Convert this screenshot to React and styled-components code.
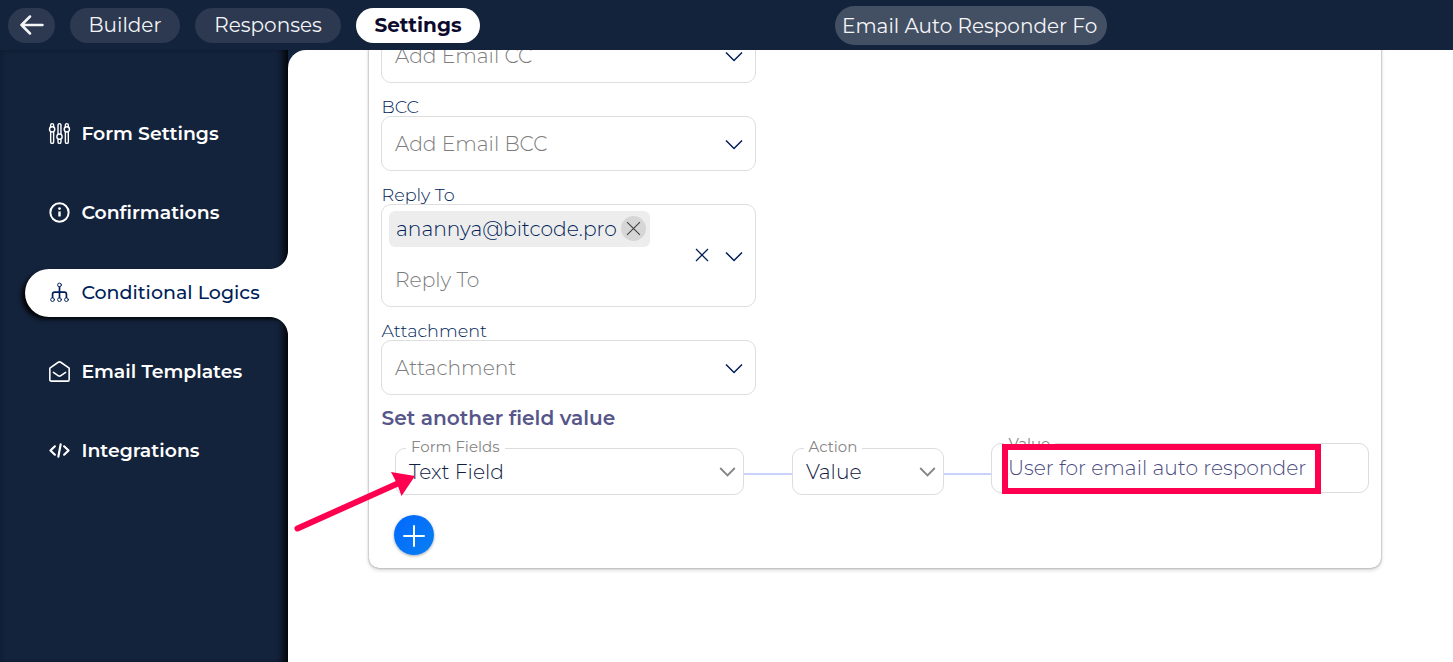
import React from 'react';
import styled, { createGlobalStyle, css } from 'styled-components';

const NAVY = '#14233c';

const GlobalStyle = createGlobalStyle`
  * { box-sizing: border-box; }
  body {
    margin: 0;
    background: ${NAVY};
    overflow: hidden;
    font-family: Montserrat, Inter, 'Open Sans', sans-serif;
    font-size: 20px;
    color: #001e58;
  }
`;

const Page = styled.div`
  display: flex;
  flex-direction: column;
  height: 662px;
`;

const Label = styled.span`
  white-space: nowrap;
`;

/* ---------- top bar ---------- */

const TopBar = styled.header`
  display: flex;
  align-items: center;
  height: 50px;
  flex: none;
  padding: 1px 0 0 8px;
  background: ${NAVY};
`;

const NavPill = styled.button`
  display: flex;
  align-items: center;
  justify-content: center;
  width: ${(p) => p.$width}px;
  height: 35px;
  margin: 0 15px 0 0;
  padding: 0 0 1px;
  border: 0;
  border-radius: 18px;
  font: inherit;
  background: ${(p) => (p.$active ? '#fff' : '#2c3950')};
  color: ${(p) => (p.$active ? '#0c0b2e' : '#f4f5f7')};
  font-weight: ${(p) => (p.$active ? 700 : 400)};
`;

const FormName = styled.div`
  display: flex;
  align-items: center;
  width: 272px;
  height: 39px;
  margin-left: 340px;
  padding-left: 7px;
  border-radius: 20px;
  background: #434f63;
  color: #f4f5f7;
`;

/* ---------- side menu ---------- */

const Body = styled.div`
  display: flex;
  flex: 1;
  min-height: 0;
`;

const Sidebar = styled.nav`
  display: flex;
  flex-direction: column;
  gap: 31.25px;
  width: 288px;
  flex: none;
  padding: 60px 0 0 25px;
  background: ${NAVY};
  box-shadow: inset -9px 0 8px -5px #000, inset 3px 0 5px -3px #0c1830;
`;

const activeItem = css`
  position: relative;
  top: 0.5px;
  background: #fff;
  color: #001e58;
  font-size: 19px;
  font-weight: 500;
  box-shadow: -4px 3px 5px -1px #000;

  &::before,
  &::after {
    content: '';
    position: absolute;
    right: 0;
    width: 18px;
    height: 18px;
  }
  &::before {
    bottom: 100%;
    background: radial-gradient(circle at 0 0, transparent 17.5px, #fff 18.3px);
  }
  &::after {
    top: 100%;
    background: radial-gradient(circle at 0 100%, transparent 17.5px, #fff 18.3px);
  }
`;

const MenuItem = styled.a`
  display: flex;
  align-items: center;
  gap: 12.4px;
  height: 48px;
  padding: 0 0 1px 24px;
  border-radius: 24px 0 0 24px;
  font-size: 18.85px;
  font-weight: 600;
  line-height: 23px;
  color: #fff;
  ${(p) => p.$active && activeItem}
`;

const MenuIcon = styled.svg`
  width: 21px;
  height: 21px;
  margin-right: -1px;
  flex: none;
  overflow: visible;
  fill: none;
  stroke: currentColor;
  stroke-width: ${(p) => p.$weight || 1.5};
  stroke-linecap: round;
  stroke-linejoin: round;
`;

/* ---------- content ---------- */

const Main = styled.main`
  position: relative;
  display: flex;
  flex-direction: column;
  align-items: flex-start;
  flex: 1;
  padding-left: 81px;
  background: #fff;
  border-top-left-radius: 18px;
  overflow: hidden;
`;

const Card = styled.section`
  display: flex;
  flex-direction: column;
  align-items: flex-start;
  width: 1012px;
  height: 540px;
  margin-top: -22px;
  padding-left: 12px;
  border-radius: 0 0 10px 10px;
  background: #fff;
  box-shadow: 0 0 2px rgba(0, 0, 0, 0.45), 0 2px 4px rgba(0, 0, 0, 0.18);
`;

const FieldLabel = styled.label`
  display: flex;
  align-items: flex-end;
  height: 33px;
  padding-left: 0.5px;
  font-size: 17.6px;
  line-height: 18px;
  font-weight: 300;
`;

const Select = styled.div`
  display: flex;
  align-items: center;
  justify-content: space-between;
  width: 375px;
  height: ${(p) => p.$height || 55}px;
  padding: 0 12px 0 7px;
  border: 1px solid #dedede;
  border-radius: 10px;
  font-size: 20.25px;
  font-weight: 300;
`;

const SelectBody = styled.div`
  display: flex;
  flex-direction: column;
  align-items: flex-start;
  gap: 20px;
  padding-bottom: 8px;
`;

const Placeholder = styled.span`
  padding-left: 6px;
  line-height: 26px;
  color: #7c7c7c;
`;

const Tag = styled.span`
  display: flex;
  align-items: center;
  gap: 4px;
  width: 261px;
  height: 36px;
  padding-left: 7px;
  border-radius: 6px;
  background: #ededed;
`;

const TagRemove = styled.span`
  display: flex;
  align-items: center;
  justify-content: center;
  width: 25px;
  height: 25px;
  flex: none;
  border-radius: 50%;
  background: #d6d6d6;
  color: #444;
`;

const Controls = styled.span`
  display: flex;
  align-items: center;
  gap: 16px;
  padding-top: 2px;
`;

const LineIcon = styled.svg`
  display: block;
  fill: none;
  stroke: currentColor;
  stroke-width: ${(p) => p.$weight || 1.5};
  stroke-linecap: ${(p) => p.$cap || 'butt'};
`;

const ClearIcon = styled(LineIcon)`
  margin-bottom: 3px;
`;

const Heading = styled.h2`
  margin: 10px 0 0;
  height: 43px;
  padding-left: 0.5px;
  font-size: 20.15px;
  line-height: 25px;
  font-weight: 600;
  color: #56568a;
`;

const LogicRow = styled.div`
  display: flex;
  align-items: flex-start;
  margin-left: 14px;
`;

const Outlined = styled.div`
  position: relative;
  display: flex;
  align-items: center;
  justify-content: space-between;
  width: ${(p) => p.$width}px;
  height: ${(p) => p.$height || 47}px;
  margin-top: ${(p) => (p.$height ? -5 : 0)}px;
  padding: 0 7px ${(p) => (p.$height ? 2 : 0)}px ${(p) => p.$inset || 13}px;
  border: 1px solid #dcdcdc;
  border-radius: 10px;
  font-size: 20.25px;
  font-weight: 300;
  color: ${(p) => p.$color || '#0f2042'};
`;

const Notch = styled.span`
  position: absolute;
  top: ${(p) => p.$top || -11}px;
  left: ${(p) => p.$left || 10}px;
  padding: 0 5px;
  background: #fff;
  font-size: 15px;
  line-height: 18px;
  font-weight: 400;
  color: #858585;
`;

const Connector = styled.span`
  width: ${(p) => p.$width}px;
  height: 2px;
  margin-top: 25px;
  background: #c8d2fb;
`;

const AddButton = styled.button`
  display: flex;
  align-items: center;
  justify-content: center;
  width: 40px;
  height: 40px;
  margin: 20px 0 0 13px;
  padding: 1px 0 0;
  border: 0;
  border-radius: 50%;
  color: #fff;
  background: linear-gradient(135deg, #0068ff, #0a7ff0);
  box-shadow: 0 1px 3px rgba(0, 0, 0, 0.35);
`;

const Highlight = styled.div`
  position: absolute;
  left: 714px;
  top: 394px;
  width: 319px;
  height: 50px;
  border: 6px solid #ff0050;
`;

const Pointer = styled.svg`
  position: absolute;
  left: 0;
  top: 412px;
`;

const FormSettingsIcon = () => (
  <MenuIcon viewBox="0 0 20 20" $weight={1.35}>
    <path d="M1.6 3.7V2a1.4 1.4 0 0 1 2.8 0v1.7M1.6 8.3V18a1.4 1.4 0 0 0 2.8 0V8.3M8.6 10.7V2a1.4 1.4 0 0 1 2.8 0v8.7M8.6 15.3V18a1.4 1.4 0 0 0 2.8 0v-2.7M15.6 3.7V2a1.4 1.4 0 0 1 2.8 0v1.7M15.6 8.3V18a1.4 1.4 0 0 0 2.8 0V8.3" />
    <circle cx="3" cy="6" r="2.5" />
    <circle cx="10" cy="13" r="2.5" />
    <circle cx="17" cy="6" r="2.5" />
  </MenuIcon>
);

const InfoIcon = () => (
  <MenuIcon viewBox="0 0 20 20" $weight={1.9}>
    <circle cx="10" cy="10" r="8.7" />
    <path d="M10 9v4.800" strokeLinecap="butt" strokeWidth="2.3" />
    <circle cx="10" cy="6.2" r="1.3" fill="currentColor" stroke="none" />
  </MenuIcon>
);

const LogicIcon = () => (
  <MenuIcon viewBox="0 0 20 20" $weight={0.9}>
    <circle cx="10" cy="2.8" r="1.8" />
    <circle cx="3.4" cy="16.8" r="1.8" />
    <circle cx="10" cy="16.8" r="1.8" />
    <circle cx="16.6" cy="16.8" r="1.8" />
    <path d="M10 4.8v10M3.400 14.600v-3q0-2 2-2h9.200q2 0 2 2v3" strokeWidth="1.6" />
  </MenuIcon>
);

const MailIcon = () => (
  <MenuIcon viewBox="0 0 20 20" $weight={1.5}>
    <path d="M.8 6.800 8.800 1.200q1.200-.7 2.400 0l8 5.600v11q0 1.400-1.400 1.400H2.200Q.8 19.200.8 17.800z" />
    <path d="m4.200 10.800 4.800 3.300q1 .6 2 0l4.800-3.300" />
  </MenuIcon>
);

const CodeIcon = () => (
  <MenuIcon viewBox="0 0 20 20" $weight={2.1}>
    <path d="M5.600 6 1.400 10l4.200 4M14.400 6 18.600 10l-4.200 4M11.100 4.200 8.900 15.800" />
  </MenuIcon>
);

const Chevron = () => (
  <LineIcon width="18" height="11" viewBox="0 0 18 11" $weight={1.5}>
    <path d="m1 1.500 8 8 8-8" />
  </LineIcon>
);

const GreyChevron = styled(LineIcon)`
  color: #858585;
`;

const SmallChevron = () => (
  <GreyChevron width="17" height="11" viewBox="0 0 17 11" $weight={1.8}>
    <path d="m1.200 2 7.300 7.500 7.300-7.500" />
  </GreyChevron>
);

const menu = [
  { text: 'Form Settings', icon: FormSettingsIcon },
  { text: 'Confirmations', icon: InfoIcon },
  { text: 'Conditional Logics', icon: LogicIcon, active: true },
  { text: 'Email Templates', icon: MailIcon },
  { text: 'Integrations', icon: CodeIcon },
];

export default function App() {
  return (
    <Page>
      <GlobalStyle />
      <TopBar>
        <NavPill $width={47} aria-label="Back">
          <LineIcon width="24" height="20" viewBox="0 0 24 20" $weight={2.5} $cap="round">
            <path d="M22.500 10H1.500M10 1.500 1.500 10l8.500 8.500" strokeLinejoin="round" />
          </LineIcon>
        </NavPill>
        <NavPill $width={110}><Label>Builder</Label></NavPill>
        <NavPill $width={146}><Label>Responses</Label></NavPill>
        <NavPill $width={124} $active><Label>Settings</Label></NavPill>
        <FormName><Label>Email Auto Responder Fo</Label></FormName>
      </TopBar>
      <Body>
        <Sidebar>
          {menu.map(({ text, icon: Icon, active }) => (
            <MenuItem key={text} $active={active}>
              <Icon />
              <Label>{text}</Label>
            </MenuItem>
          ))}
        </Sidebar>
        <Main>
          <Card>
            <Select>
              <Placeholder>Add Email CC</Placeholder>
              <Controls><Chevron /></Controls>
            </Select>
            <FieldLabel><Label>BCC</Label></FieldLabel>
            <Select>
              <Placeholder>Add Email BCC</Placeholder>
              <Controls><Chevron /></Controls>
            </Select>
            <FieldLabel><Label>Reply To</Label></FieldLabel>
            <Select $height={103}>
              <SelectBody>
                <Tag>
                  <Label>anannya@bitcode.pro</Label>
                  <TagRemove>
                    <LineIcon width="15" height="15" viewBox="0 0 14 14" $weight={1.1}>
                      <path d="m1 1 12 12M13 1 1 13" />
                    </LineIcon>
                  </TagRemove>
                </Tag>
                <Placeholder>Reply To</Placeholder>
              </SelectBody>
              <Controls>
                <ClearIcon width="14" height="14" viewBox="0 0 14 14" $weight={1.3}>
                  <path d="m1 1 12 12M13 1 1 13" />
                </ClearIcon>
                <Chevron />
              </Controls>
            </Select>
            <FieldLabel><Label>Attachment</Label></FieldLabel>
            <Select>
              <Placeholder>Attachment</Placeholder>
              <Controls><Chevron /></Controls>
            </Select>
            <Heading>Set another field value</Heading>
            <LogicRow>
              <Outlined $width={349}>
                <Notch>Form Fields</Notch>
                <Label>Text Field</Label>
                <SmallChevron />
              </Outlined>
              <Connector $width={48} />
              <Outlined $width={152}>
                <Notch $left={10.5}>Action</Notch>
                <Label>Value</Label>
                <SmallChevron />
              </Outlined>
              <Connector $width={47} />
              <Outlined $width={378} $height={50} $inset={16} $color="#4a4a80">
                <Notch $left={11.5} $top={-9}>Value</Notch>
                <Label>User for email auto responder</Label>
              </Outlined>
            </LogicRow>
            <AddButton aria-label="Add">
              <LineIcon width="22" height="22" viewBox="0 0 22 22" $weight={2} $cap="round">
                <path d="M11 1v20M1 11h20" />
              </LineIcon>
            </AddButton>
          </Card>
          <Highlight />
          <Pointer width="140" height="80" viewBox="0 0 140 80">
            <path d="M9.500 66.500 112 20.500" stroke="#ff0050" strokeWidth="6" strokeLinecap="round" />
            <path d="M127 14 103 10l6 11.500L113.500 34z" fill="#ff0050" />
          </Pointer>
        </Main>
      </Body>
    </Page>
  );
}
